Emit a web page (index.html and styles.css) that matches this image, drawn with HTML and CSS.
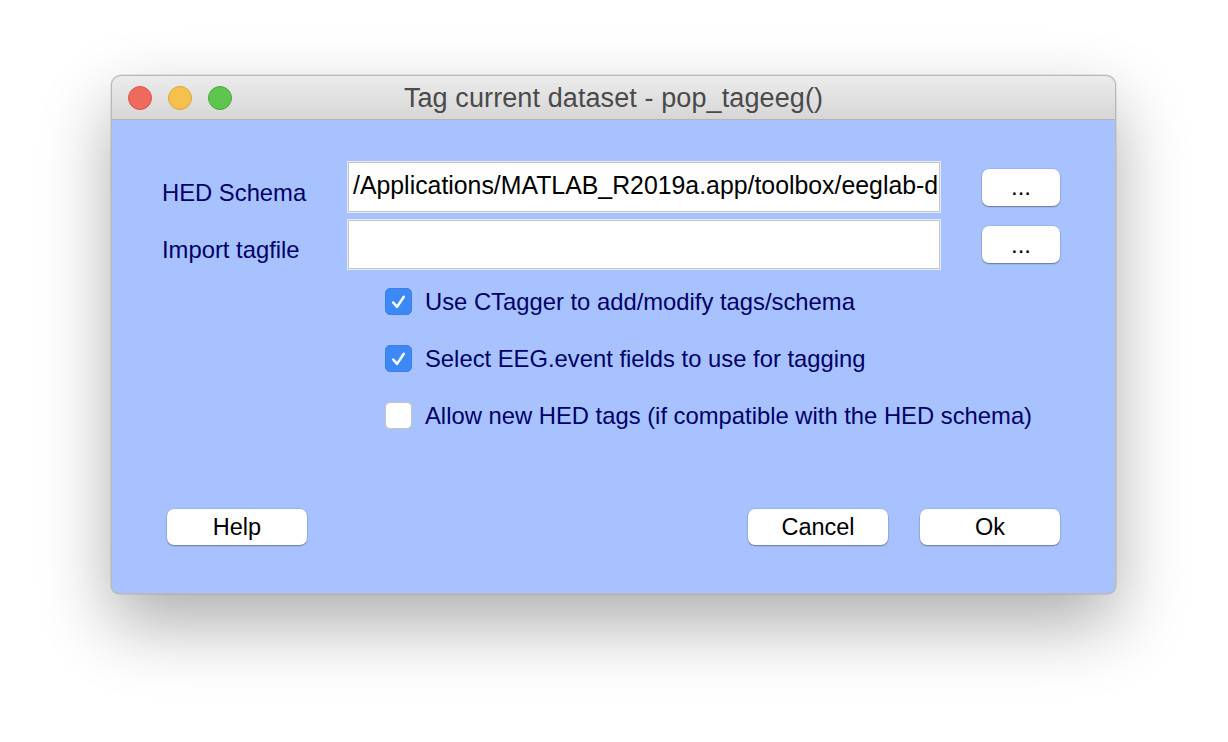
FILE: index.html
```html
<!DOCTYPE html>
<html>
<head>
<meta charset="utf-8">
<link rel="stylesheet" href="styles.css">
</head>
<body>
<div class="stage">
  <div class="window">
    <div class="titlebar">
      <div class="lights">
        <span class="light red"></span>
        <span class="light yellow"></span>
        <span class="light green"></span>
      </div>
      <div class="title">Tag current dataset - pop_tageeg()</div>
    </div>
    <div class="content">
      <div class="fields">
        <div class="label">HED Schema</div>
        <div class="input">/Applications/MATLAB_R2019a.app/toolbox/eeglab-d</div>
        <button class="btn small">...</button>
        <div class="label">Import tagfile</div>
        <div class="input"></div>
        <button class="btn small">...</button>
      </div>
      <div class="checks">
        <div class="check-row">
          <span class="box on"><svg viewBox="0 0 28 28" width="28" height="28"><path d="M8.5 14.5 L12.5 19 L19.5 8.5" fill="none" stroke="#fff" stroke-width="2.6" stroke-linecap="round" stroke-linejoin="round"/></svg></span>
          <span class="check-label">Use CTagger to add/modify tags/schema</span>
        </div>
        <div class="check-row">
          <span class="box on"><svg viewBox="0 0 28 28" width="28" height="28"><path d="M8.5 14.5 L12.5 19 L19.5 8.5" fill="none" stroke="#fff" stroke-width="2.6" stroke-linecap="round" stroke-linejoin="round"/></svg></span>
          <span class="check-label">Select EEG.event fields to use for tagging</span>
        </div>
        <div class="check-row">
          <span class="box"></span>
          <span class="check-label">Allow new HED tags (if compatible with the HED schema)</span>
        </div>
      </div>
      <div class="actions">
        <button class="btn wide">Help</button>
        <div class="spacer"></div>
        <button class="btn wide">Cancel</button>
        <button class="btn wide">Ok</button>
      </div>
    </div>
  </div>
</div>
</body>
</html>
```

FILE: styles.css
```css
html, body {
  margin: 0;
  padding: 0;
  background: #ffffff;
}
body {
  width: 1228px;
  height: 742px;
  overflow: hidden;
  font-family: "Liberation Sans", Arial, sans-serif;
}
.stage {
  padding: 75px 0 0 111px;
}
.window {
  width: 1005px;
  height: 519px;
  box-sizing: border-box;
  border: 1px solid #b9b9b9;
  border-radius: 10px 10px 8px 8px;
  overflow: hidden;
  background: #a8c2ff;
  box-shadow: 0 30px 70px rgba(0, 0, 0, 0.32), 0 0 0 0.5px rgba(0,0,0,0.15);
  display: flex;
  flex-direction: column;
}
.titlebar {
  height: 43px;
  flex: none;
  position: relative;
  background: linear-gradient(#ececec, #d6d6d6);
  border-bottom: 1px solid #b4b4b4;
  display: flex;
  align-items: center;
  justify-content: center;
}
.lights {
  position: absolute;
  left: 16px;
  top: 10px;
  display: flex;
  gap: 16px;
}
.light {
  width: 24px;
  height: 24px;
  border-radius: 50%;
  box-sizing: border-box;
}
.red { background: #ef6a5e; border: 1px solid #dc5347; }
.yellow { background: #f6c04f; border: 1px solid #dea43a; }
.green { background: #5ec54f; border: 1px solid #4daa3c; }
.title {
  font-size: 27px;
  color: #4a4a4a;
  margin-top: 1px;
  letter-spacing: 0.1px;
}
.content {
  flex: 1;
  display: flex;
  flex-direction: column;
  padding: 42px 55px 0 50px;
}
.fields {
  display: grid;
  grid-template-columns: 186px 592px 42px 78px;
  grid-template-rows: 50px 49px;
  row-gap: 8px;
  align-items: center;
}
.fields > .label { grid-column: 1; }
.fields > .input { grid-column: 2; }
.fields > .btn { grid-column: 4; }
.label {
  font-size: 23.8px;
  color: #000066;
  padding-top: 11px;
  white-space: nowrap;
}
.input {
  height: 100%;
  box-sizing: border-box;
  background: #fff;
  border: 1px solid #c6c6c6;
  box-shadow: inset 0 0 0 1px #fff, 0 0 0 1px #e4ebff;
  font-size: 24.85px;
  color: #000;
  white-space: nowrap;
  overflow: hidden;
  padding: 10px 0 0 4px;
  line-height: 26px;
}
.btn {
  background: #fff;
  border: none;
  border-radius: 7px;
  box-shadow: 0 1px 1.5px rgba(0, 0, 0, 0.35), 0 0 0 0.5px rgba(0,0,0,0.12);
  font-family: "Liberation Sans", Arial, sans-serif;
  font-size: 23.5px;
  color: #000;
  padding: 0;
}
.btn.small {
  height: 37px;
  width: 78px;
  font-size: 24px;
  line-height: 30px;
}
.checks {
  display: flex;
  flex-direction: column;
  gap: 29px;
  padding: 18px 0 0 223px;
}
.check-row {
  display: flex;
  align-items: center;
  gap: 13px;
  height: 28px;
}
.box {
  width: 27px;
  height: 27px;
  box-sizing: border-box;
  border-radius: 5px;
  background: #fff;
  border: 1px solid #c4c4c4;
  display: flex;
  flex: none;
}
.box.on {
  background: #3c89f5;
  border-color: #3a80e8;
}
.box svg { display: block; margin: -1px; }
.check-label {
  font-size: 23.8px;
  color: #000066;
  white-space: nowrap;
  padding-top: 2px;
}
.actions {
  display: flex;
  gap: 32px;
  margin-top: 80px;
  padding-left: 5px;
}
.spacer { flex: 1; }
.btn.wide {
  width: 140px;
  height: 36px;
}
```
